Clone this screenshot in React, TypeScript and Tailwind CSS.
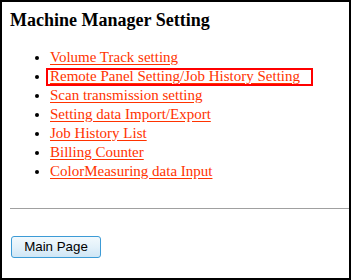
import React from 'react';

const links = [
  'Volume Track setting',
  'Remote Panel Setting/Job History Setting',
  'Scan transmission setting',
  'Setting data Import/Export',
  'Job History List',
  'Billing Counter',
  'ColorMeasuring data Input',
];

const App: React.FC = () => {
  return (
    <div className="w-[351px] h-[280px] border-2 border-black bg-white pl-2 pt-[7px] font-['Liberation_Serif',serif] text-black overflow-hidden">
      <h3 className="text-[18px] leading-[22px] font-bold">Machine Manager Setting</h3>

      <ul className="mt-[17px] pl-10 list-disc text-[15px] leading-[19px]">
        {links.map((label, i) => (
          <li key={label}>
            <span className="relative">
              <a href="#" className="text-[#ff3300] underline underline-offset-[2px]">
                {label}
              </a>
              {i === 1 && (
                <span className="absolute left-[-4px] top-0 w-[267px] h-[18px] border-2 border-[#ff0000] pointer-events-none" />
              )}
            </span>
          </li>
        ))}
      </ul>

      <hr className="mt-[27px] border-0 border-t border-[#a0a0a0]" />

      <button className="mt-[27px] ml-[1px] w-[90px] h-[22px] rounded-[3px] border border-[#3c9bd6] bg-gradient-to-b from-[#f2f9fd] via-[#e3f1fa] to-[#cfe6f5] font-['Liberation_Sans',Arial,sans-serif] text-[13.33px] text-black leading-none">
        Main Page
      </button>
    </div>
  );
};

export default App;
